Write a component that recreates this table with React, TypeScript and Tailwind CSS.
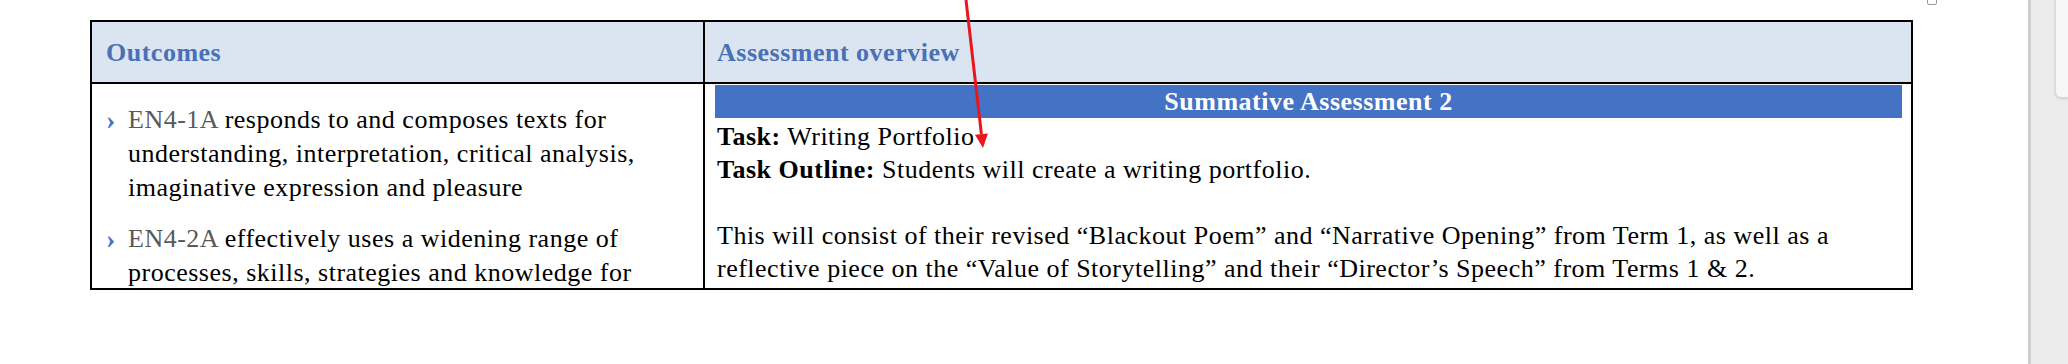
import type { ReactNode } from 'react'

const serif = { fontFamily: '"Liberation Serif", "Times New Roman", serif' }

function Outcome({ code, children }: { code: string; children: ReactNode }) {
  return (
    <div className="flex">
      <span className="w-[22px] shrink-0 text-[28px] font-bold text-[#4472c4]">›</span>
      <p>
        <span className="text-[#595959]">{code}</span> {children}
      </p>
    </div>
  )
}

function RedArrow() {
  return (
    <svg className="pointer-events-none absolute left-0 top-0" width="2068" height="364">
      <line x1="966" y1="0" x2="981.4" y2="134" stroke="#e8161f" strokeWidth="3" />
      <polygon points="983,148 987.9,133.4 975,134.8" fill="#e8161f" />
    </svg>
  )
}

export default function App() {
  return (
    <div
      className="relative flex h-[364px] w-[2068px] overflow-hidden bg-white text-[26px] tracking-[0.5px] text-black"
      style={serif}
    >
      <div className="flex-1 pl-[90px] pt-[20px]">
        <div className="w-[1823px] border-2 border-black">
          {/* header row */}
          <div className="grid h-[62px] grid-cols-[613px_1fr] border-b-2 border-black bg-[#dbe5f1] font-bold text-[#4a70b6]">
            <div className="flex items-center border-r-2 border-black pl-[14px]">Outcomes</div>
            <div className="flex items-center pl-[12px]">Assessment overview</div>
          </div>

          {/* body row (page break cuts it off) */}
          <div className="grid h-[204px] grid-cols-[613px_1fr] overflow-hidden">
            <div className="flex flex-col gap-[17px] border-r-2 border-black pl-[14px] pr-[6px] pt-[19px] leading-[34px]">
              <Outcome code="EN4-1A">
                responds to and composes texts for
                <br />
                understanding, interpretation, critical analysis,
                <br />
                imaginative expression and pleasure
              </Outcome>
              <Outcome code="EN4-2A">
                effectively uses a widening range of
                <br />
                processes, skills, strategies and knowledge for
              </Outcome>
            </div>

            <div className="pl-[10px] pr-[9px] pt-[1px] leading-[33px]">
              <div className="flex h-[33px] items-center justify-center bg-[#4472c4] font-bold text-white">
                Summative Assessment 2
              </div>
              <div className="whitespace-nowrap pl-[2px] pt-[2px]">
                <p>
                  <b>Task:</b> Writing Portfolio
                </p>
                <p>
                  <b>Task Outline:</b> Students will create a writing portfolio.
                </p>
                <p className="h-[33px]" />
                <p>
                  This will consist of their revised “Blackout Poem” and “Narrative Opening” from Term 1,
                  as well as a
                  <br />
                  reflective piece on the “Value of Storytelling” and their “Director’s Speech” from Terms
                  1 &amp; 2.
                </p>
              </div>
            </div>
          </div>
        </div>
      </div>

      {/* small handle above table corner */}
      <div className="absolute left-[1927px] top-[-4px] h-[9px] w-[10px] rounded-[2px] border border-[#9a9a9a] bg-white" />

      {/* right side panel */}
      <div className="relative w-[40px] border-l-[3px] border-[#cdcdcd] bg-[#ececec]">
        <div className="absolute left-[24px] top-[-2px] h-[100px] w-[30px] rounded-bl-[6px] border border-[#d9d9d9] bg-[#f7f7f7] shadow-sm" />
      </div>

      <RedArrow />
    </div>
  )
}
